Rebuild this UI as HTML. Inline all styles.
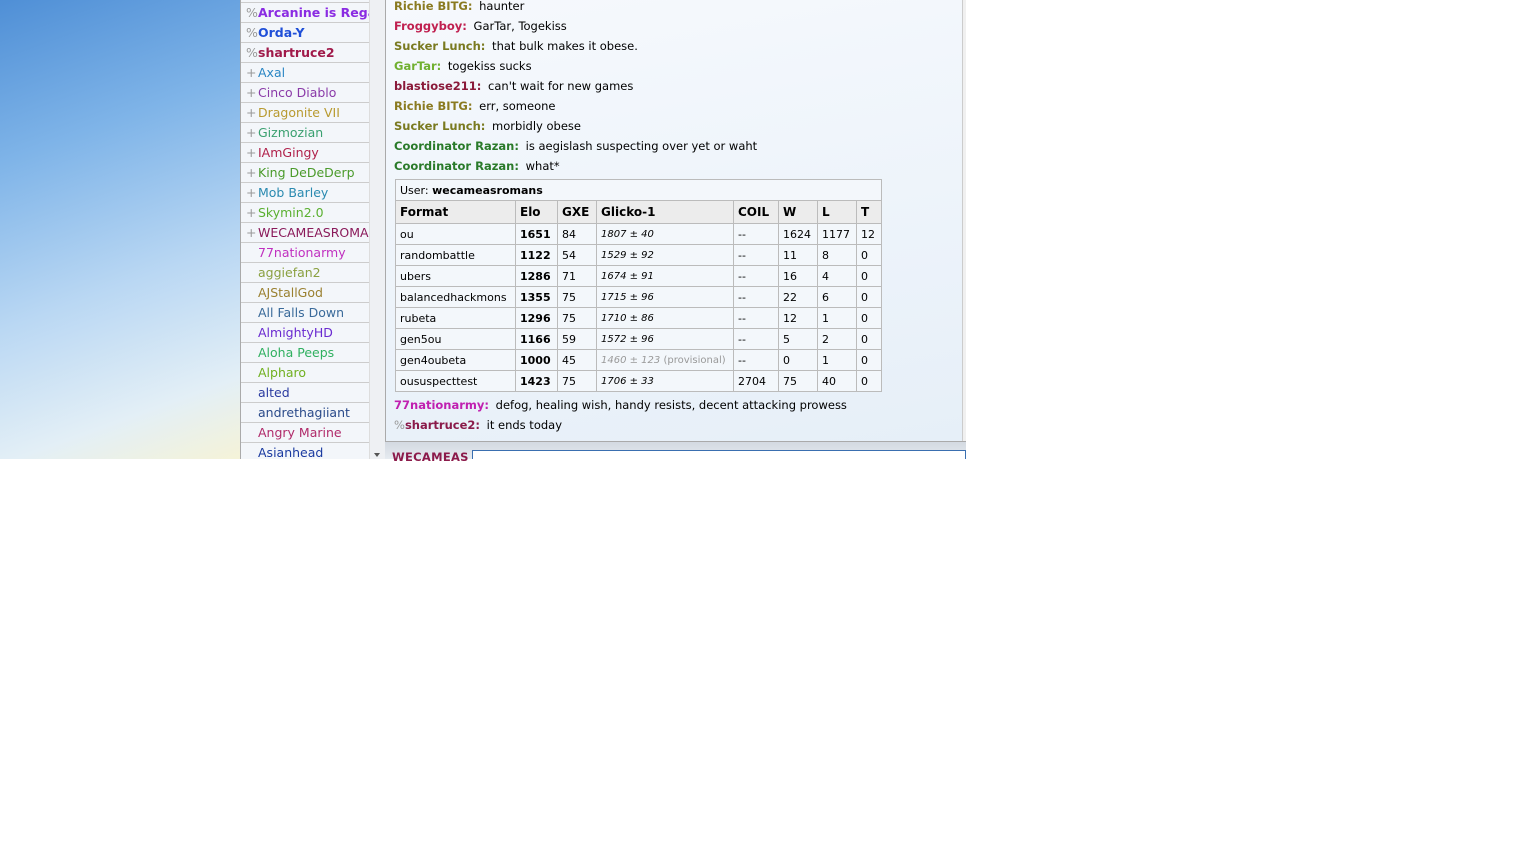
<!DOCTYPE html>
<html><head><meta charset="utf-8"><style>
*{margin:0;padding:0;box-sizing:border-box}
body{width:1539px;height:864px;background:#fff;position:relative;overflow:hidden;font-family:"DejaVu Sans","Liberation Sans",sans-serif;font-size:11.5px;color:#000}
#sky{position:absolute;left:0;top:0;width:240px;height:459px;background:linear-gradient(160deg,#4f8fd6 0%,#7fb4e8 30%,#b9d7f3 60%,#e3eff6 85%,#f5f3d8 100%)}
#list{position:absolute;left:240px;top:0;width:129px;height:459px;background:#f3f6fa;border-left:1px solid #aaa;overflow:hidden}
#list div{height:20px;border-bottom:1px solid #ccc;line-height:20px;padding-left:17px;white-space:nowrap;font-size:12.5px;position:relative;top:3px}
#list div:first-child{margin-top:-20px}
#list .g{color:#999;position:absolute;left:5px;font-weight:normal}
#list .b{font-weight:bold}
#sb{position:absolute;left:369px;top:0;width:16px;height:459px;background:#eef0f3;border-left:1px solid #ddd}
#sb:after{content:"";position:absolute;left:4px;top:453px;border:3px solid transparent;border-top:4px solid #555}
#chat{position:absolute;left:385px;top:0;width:577px;height:441px;background:linear-gradient(170deg,#f6f9fd,#e6eff8);border-left:1px solid #aaa;overflow:hidden}
#chat p{position:absolute;left:8px;line-height:20px;white-space:nowrap}
#chat p b{margin-right:3px}
table{position:absolute;left:9px;top:179px;border-collapse:collapse;background:#f3f7fb;width:486px;table-layout:fixed}
td,th{border:1px solid #bbb;height:21px;padding:0 4px;text-align:left;white-space:nowrap;font-size:11px;overflow:hidden}
th{background:#ececec;height:23px;font-size:12px}
td.e{font-weight:bold}
td.i{font-style:italic;font-size:10px}
#bot{position:absolute;left:385px;top:441px;width:581px;height:18px;background:linear-gradient(#d3d9e1,#e6ebf0);border-top:1px solid #aaa}
#bot span{position:absolute;left:7px;top:8px;color:#8b1a4a;font-weight:bold;font-size:11.5px;letter-spacing:.3px}
#inp{position:absolute;left:472px;top:450px;width:494px;height:9px;background:#fff;border:1px solid #3a6fb0;border-bottom:none}
#rt{position:absolute;left:962px;top:0;width:4px;height:441px;background:#f0f0f0;border-left:1px solid #ccc}
</style></head><body>
<div id="sky"></div>
<div id="list">
<div></div>
<div class="b" style="color:#8a2be2"><span class="g">%</span>Arcanine is Regal</div>
<div class="b" style="color:#1f4fd8"><span class="g">%</span>Orda-Y</div>
<div class="b" style="color:#a01a4a"><span class="g">%</span>shartruce2</div>
<div style="color:#2a86c4"><span class="g">+</span>Axal</div>
<div style="color:#8a3aa8"><span class="g">+</span>Cinco Diablo</div>
<div style="color:#b89a30"><span class="g">+</span>Dragonite VII</div>
<div style="color:#3aa070"><span class="g">+</span>Gizmozian</div>
<div style="color:#b0204a"><span class="g">+</span>IAmGingy</div>
<div style="color:#4a9a2a"><span class="g">+</span>King DeDeDerp</div>
<div style="color:#2a8ab0"><span class="g">+</span>Mob Barley</div>
<div style="color:#5ab030"><span class="g">+</span>Skymin2.0</div>
<div style="color:#8a1a5a"><span class="g">+</span>WECAMEASROMANS</div>
<div style="color:#c030c0">77nationarmy</div>
<div style="color:#8aa040">aggiefan2</div>
<div style="color:#9a8030">AJStallGod</div>
<div style="color:#3a6a9a">All Falls Down</div>
<div style="color:#6a2ad0">AlmightyHD</div>
<div style="color:#30b060">Aloha Peeps</div>
<div style="color:#70b020">Alpharo</div>
<div style="color:#2a3aa0">alted</div>
<div style="color:#2a4a8a">andrethagiiant</div>
<div style="color:#b02a6a">Angry Marine</div>
<div style="color:#1a3aa0">Asianhead</div>
</div>
<div id="sb"></div>
<div id="chat">
<p style="top:-4px"><b style="color:#8a7a20">Richie BITG:</b> haunter</p>
<p style="top:16px"><b style="color:#c02050">Froggyboy:</b> GarTar, Togekiss</p>
<p style="top:36px"><b style="color:#7a7a20">Sucker Lunch:</b> that bulk makes it obese.</p>
<p style="top:56px"><b style="color:#70b030">GarTar:</b> togekiss sucks</p>
<p style="top:76px"><b style="color:#8a1a3a">blastiose211:</b> can't wait for new games</p>
<p style="top:96px"><b style="color:#8a7a20">Richie BITG:</b> err, someone</p>
<p style="top:116px"><b style="color:#7a7a20">Sucker Lunch:</b> morbidly obese</p>
<p style="top:136px"><b style="color:#2a7a2a">Coordinator Razan:</b> is aegislash suspecting over yet or waht</p>
<p style="top:156px"><b style="color:#2a7a2a">Coordinator Razan:</b> what*</p>
<table>
<colgroup><col style="width:120px"><col style="width:42px"><col style="width:39px"><col style="width:137px"><col style="width:45px"><col style="width:39px"><col style="width:39px"><col style="width:25px"></colgroup>
<tr><td colspan="8" style="height:21px">User: <b>wecameasromans</b></td></tr>
<tr><th>Format</th><th>Elo</th><th>GXE</th><th>Glicko-1</th><th>COIL</th><th>W</th><th>L</th><th>T</th></tr>
<tr><td>ou</td><td class="e">1651</td><td>84</td><td class="i">1807 ± 40</td><td>--</td><td>1624</td><td>1177</td><td>12</td></tr>
<tr><td>randombattle</td><td class="e">1122</td><td>54</td><td class="i">1529 ± 92</td><td>--</td><td>11</td><td>8</td><td>0</td></tr>
<tr><td>ubers</td><td class="e">1286</td><td>71</td><td class="i">1674 ± 91</td><td>--</td><td>16</td><td>4</td><td>0</td></tr>
<tr><td>balancedhackmons</td><td class="e">1355</td><td>75</td><td class="i">1715 ± 96</td><td>--</td><td>22</td><td>6</td><td>0</td></tr>
<tr><td>rubeta</td><td class="e">1296</td><td>75</td><td class="i">1710 ± 86</td><td>--</td><td>12</td><td>1</td><td>0</td></tr>
<tr><td>gen5ou</td><td class="e">1166</td><td>59</td><td class="i">1572 ± 96</td><td>--</td><td>5</td><td>2</td><td>0</td></tr>
<tr><td>gen4oubeta</td><td class="e">1000</td><td>45</td><td class="i" style="color:#999">1460 ± 123 <span style="font-style:normal">(provisional)</span></td><td>--</td><td>0</td><td>1</td><td>0</td></tr>
<tr><td>oususpecttest</td><td class="e">1423</td><td>75</td><td class="i">1706 ± 33</td><td>2704</td><td>75</td><td>40</td><td>0</td></tr>
</table>
<p style="top:395px"><b style="color:#c020b0">77nationarmy:</b> defog, healing wish, handy resists, decent attacking prowess</p>
<p style="top:415px"><b style="color:#8a1a4a"><span style="color:#999;font-weight:normal">%</span>shartruce2:</b> it ends today</p>
</div>
<div id="rt"></div>
<div id="bot"><span>WECAMEAS</span></div>
<div id="inp"></div>
</body></html>
